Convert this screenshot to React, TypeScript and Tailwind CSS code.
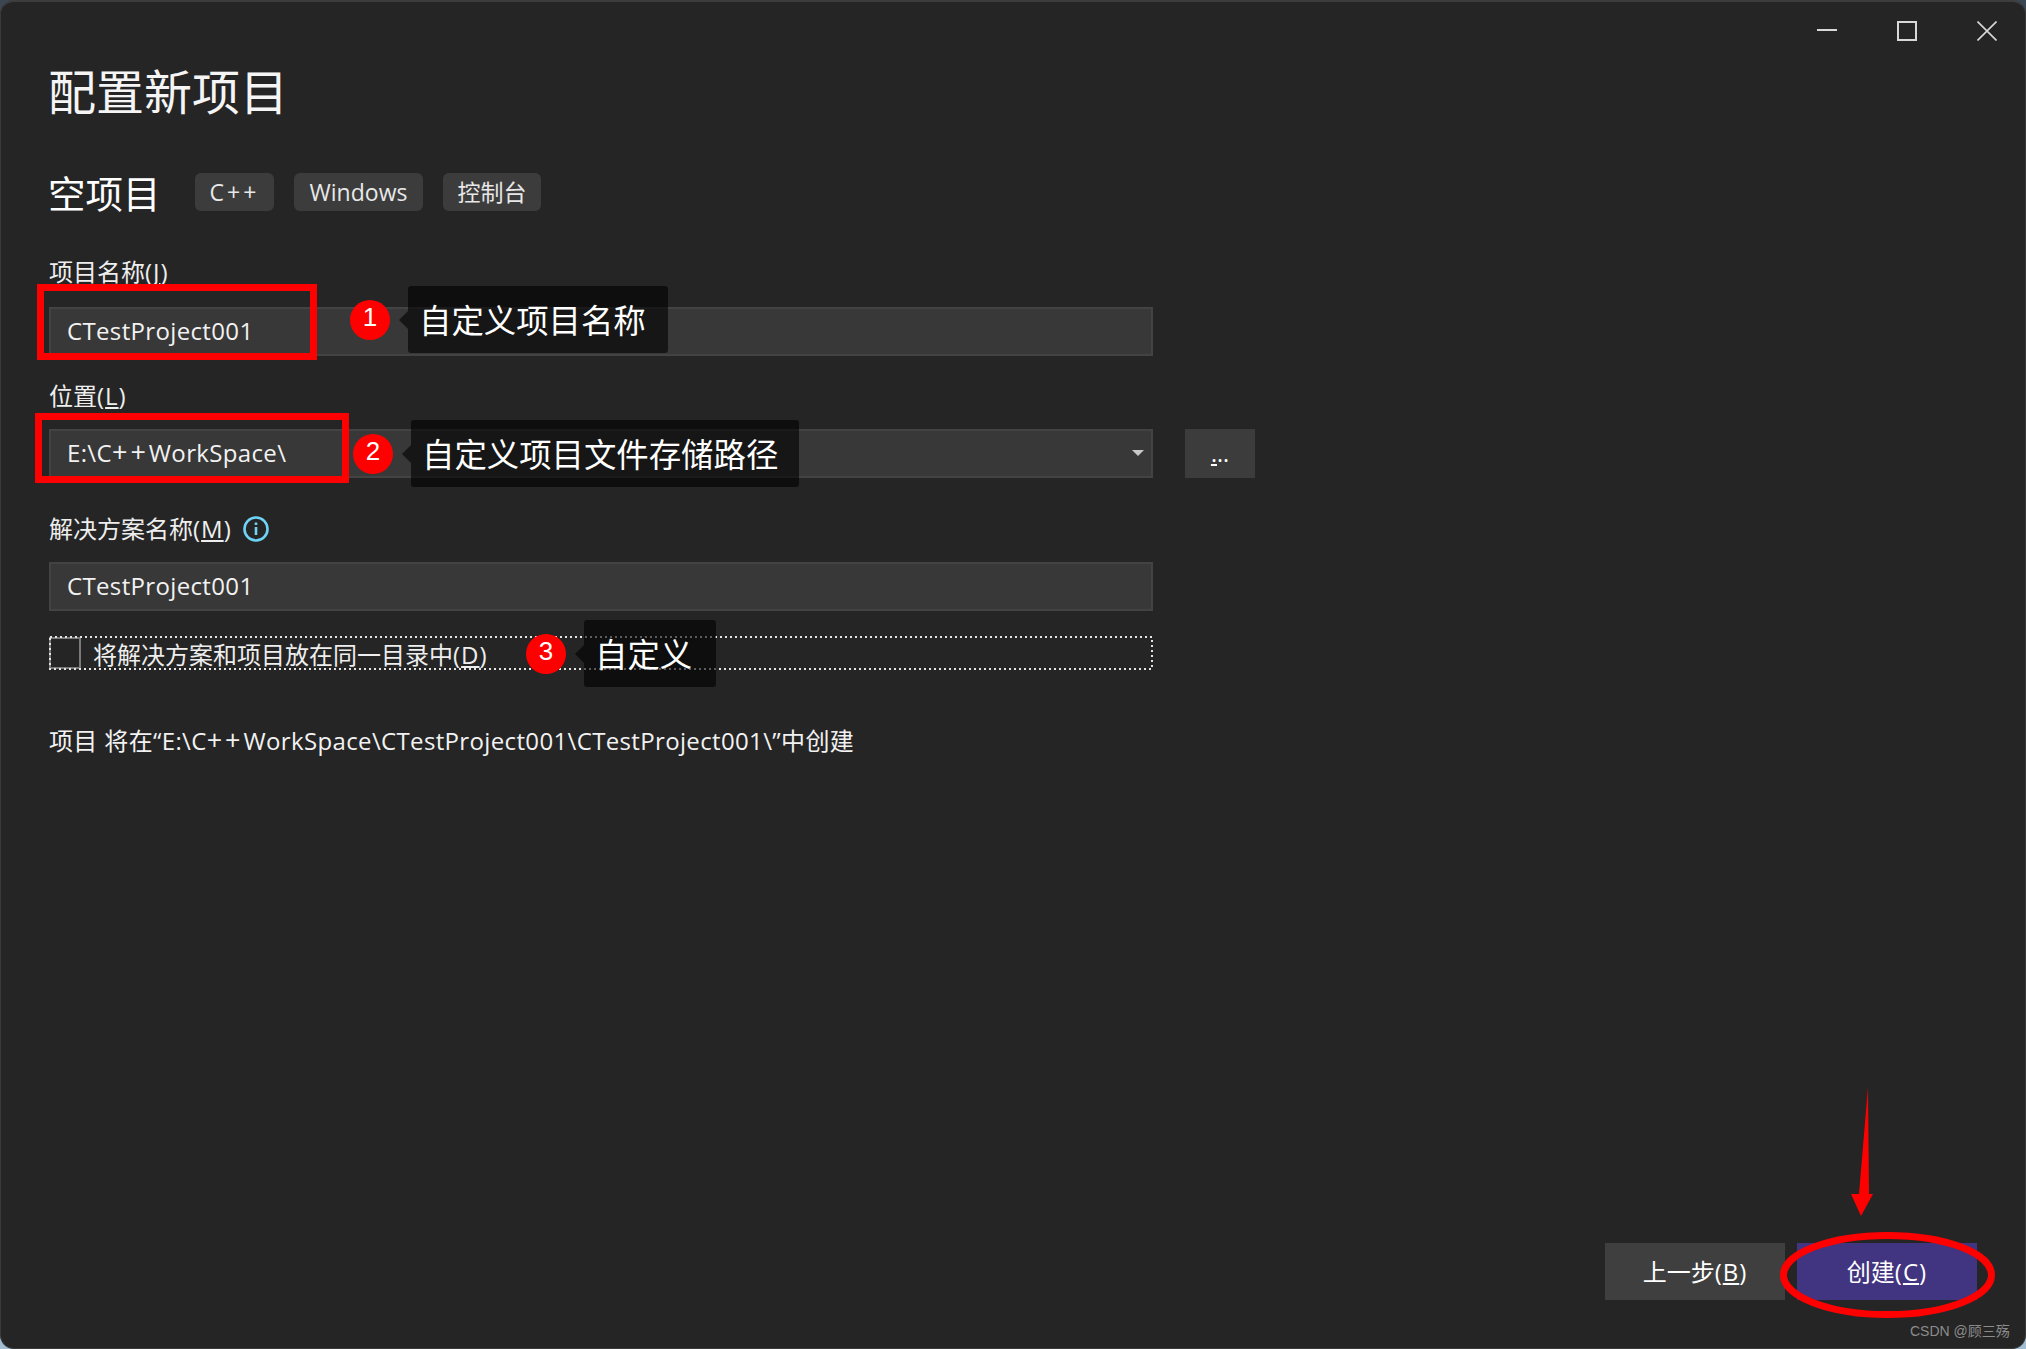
const FONT = "font-['Open_Sans','Noto_Sans_CJK_SC',sans-serif]";

const Mn = ({ c }: { c: string }) => (
  <span className="tracking-[1px]">
    (<span className="underline underline-offset-2">{c}</span>)
  </span>
);

const Plus = () => <span className="text-[27px] leading-[24px] tracking-[3px]">++</span>;

const Chip = ({ text, cls }: { text: string; cls: string }) => (
  <div className={`h-[38px] flex items-center justify-center rounded-[6px] bg-[#3c3c3c] text-[23px] text-[#e8e8e8] ${cls}`}>{text}</div>
);

const Field = ({ children }: { children: React.ReactNode }) => (
  <div className="h-[49px] w-[1104px] border-2 border-[#434343] bg-[#383838] flex items-center justify-between pl-4 pr-[7px] pb-[1px] text-[24px] tracking-[0.35px] text-[#f2f2f2]">
    {children}
  </div>
);

// numbered circle plus its dark callout, both sit over the form
const Note = ({ n, text, pos, width }: { n: string; text: string; pos: string; width: string }) => (
  <div className={`absolute flex items-center ${pos}`}>
    <div className="w-10 h-10 rounded-full bg-[#ff0000] flex items-center justify-center pb-1 text-white text-[26px] font-['Liberation_Sans',sans-serif]">
      {n}
    </div>
    <div className="ml-[9px] w-0 h-0 border-y-[9px] border-y-transparent border-r-[9px] border-r-black/60" />
    <div className={`h-[67px] pl-[11px] flex items-center rounded-[3px] bg-black/60 text-[32.4px] text-white font-['Noto_Sans_CJK_SC',sans-serif] ${width}`}>
      {text}
    </div>
  </div>
);

export default function App() {
  return (
    <div className="w-[2026px] h-[1349px] bg-gradient-to-b from-[#3a4654] to-[#a3bdd3] overflow-hidden">
      <div className={`relative w-full h-full rounded-[14px] bg-[#252525] border-l border-r border-b border-[#3a3a3a] border-t-2 border-t-[#3d3d3d] text-white ${FONT}`}>
        {/* window controls */}
        <div className="flex justify-end items-center pt-[19px] pr-[28px] gap-[60px] text-[#d8d8d8]">
          <svg width="20" height="20" viewBox="0 0 20 20" fill="none" stroke="currentColor" strokeWidth="2">
            <path d="M0 9h20" />
          </svg>
          <svg width="20" height="20" viewBox="0 0 20 20" fill="none" stroke="currentColor" strokeWidth="2">
            <rect x="1" y="1" width="18" height="18" />
          </svg>
          <svg width="20" height="20" viewBox="0 0 20 20" fill="none" stroke="currentColor" strokeWidth="1.6">
            <path d="M0.5 0.5l19 19M19.5 0.5l-19 19" />
          </svg>
        </div>

        <div className="pl-[48px] flex flex-col items-start">
          <h1 className="mt-[27px] text-[48px] leading-[48px] font-normal text-[#f5f5f5] -ml-[1px]">配置新项目</h1>

          <div className="mt-[57px] flex items-center h-[38px]">
            <div className="w-[146px] pt-[4px] text-[37.5px] leading-[38px] font-normal -ml-[1px]">空项目</div>
            <div className="flex gap-5 ml-[1px]">
              <Chip text="C++" cls="w-[79px] tracking-[3px]" />
              <Chip text="Windows" cls="w-[129px]" />
              <Chip text="控制台" cls="w-[98px]" />
            </div>
          </div>

          <label className="mt-[49px] text-[24px] leading-[24px] text-[#eeeeee]">
            项目名称<Mn c="J" />
          </label>
          <div className="mt-[23px]">
            <Field>CTestProject001</Field>
          </div>

          <label className="mt-[28px] text-[24px] leading-[24px] text-[#eeeeee]">
            位置<Mn c="L" />
          </label>
          <div className="mt-[21px] flex gap-[32px]">
            <Field>
              <span>
                E:\C<Plus />WorkSpace\
              </span>
              <div className="w-0 h-0 border-x-[6px] border-x-transparent border-t-[6px] border-t-[#c8c8c8]" />
            </Field>
            <div className="w-[70px] h-[49px] bg-[#3c3c3c] flex items-center justify-center text-[23px]">
              <span className="underline">.</span>..
            </div>
          </div>

          <div className="mt-[38px] flex items-center gap-[11px]">
            <label className="text-[24px] leading-[24px] text-[#eeeeee]">
              解决方案名称<Mn c="M" />
            </label>
            <svg width="26" height="26" viewBox="0 0 26 26" fill="none" stroke="#6fd3f5" strokeWidth="2.6">
              <circle cx="13" cy="13" r="11.5" />
              <path d="M13 11v8M13 6.5v2.6" />
            </svg>
          </div>
          <div className="mt-[20px]">
            <Field>CTestProject001</Field>
          </div>

          <div className="relative mt-[25px] w-[1104px] h-[34px] flex items-center gap-[12px]">
            <svg className="absolute inset-0" width="1104" height="34" fill="none">
              <rect x="1" y="1" width="1102" height="32" stroke="#e4e4e4" strokeWidth="2" strokeDasharray="2 3" />
            </svg>
            <div className="w-[32px] h-[32px] border-2 border-[#7a7a7a]" />
            <span className="pt-[3px] text-[24px] text-[#eeeeee]">
              将解决方案和项目放在同一目录中<Mn c="D" />
            </span>
          </div>

          <p className="mt-[58px] text-[24px] leading-[24px] tracking-[0.35px] text-[#f2f2f2]">
            项目 将在“E:\C<Plus />WorkSpace\CTestProject001\CTestProject001\”中创建
          </p>
        </div>

        {/* wizard buttons */}
        <div className="absolute right-[48px] bottom-[48px] flex gap-3 text-[24px] text-white">
          <button className="w-[180px] h-[57px] bg-[#3f3f3f]">
            上一步<Mn c="B" />
          </button>
          <button className="w-[180px] h-[57px] bg-[#413480]">
            创建<Mn c="C" />
          </button>
        </div>

        {/* annotations drawn on top of the screenshot */}
        <div className="absolute left-[36px] top-[282px] w-[280px] h-[76px] border-[7px] border-[#ff0000]" />
        <div className="absolute left-[34px] top-[411px] w-[314px] h-[70px] border-[7px] border-[#ff0000]" />
        <Note n="1" text="自定义项目名称" pos="left-[349px] top-[284px]" width="w-[260px]" />
        <Note n="2" text="自定义项目文件存储路径" pos="left-[352px] top-[418px]" width="w-[388px]" />
        <Note n="3" text="自定义" pos="left-[525px] top-[618px]" width="w-[132px]" />

        <svg className="absolute left-[1769px] top-[1078px]" width="240" height="250" viewBox="0 0 240 250">
          <path d="M98 7L99 114L103 114L91 136L81 114L89 114Z" fill="#ff0000" />
          <ellipse cx="117.5" cy="195" rx="104" ry="39.5" fill="none" stroke="#ff0000" strokeWidth="7" />
        </svg>

        <div className="absolute left-[1909px] top-[1320px] text-[14px] leading-[18px] text-[#8c8c8c] font-['Liberation_Sans','Noto_Sans_CJK_SC',sans-serif]">
          CSDN @顾三殇
        </div>
      </div>
    </div>
  );
}
